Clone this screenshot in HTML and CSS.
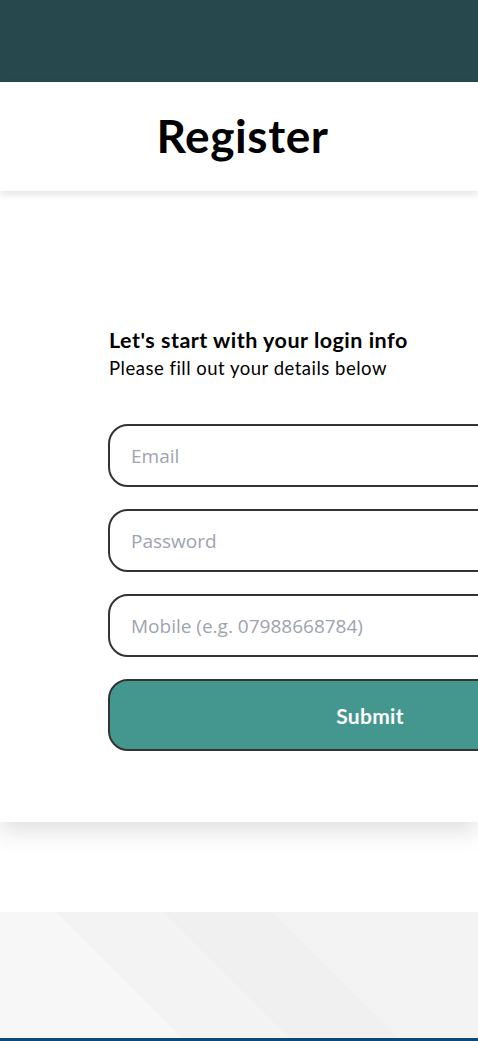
FILE: index.html
```html
<!DOCTYPE html>
<html lang="en">
<head>
<meta charset="utf-8">
<title>Register</title>
<link rel="stylesheet" href="styles.css">
</head>
<body>
  <div class="topbar"></div>
  <header class="page-header">
    <h1 class="title">Register</h1>
  </header>
  <main class="main">
    <form class="form">
      <div class="intro">
        <h2 class="intro-title">Let's start with your login info</h2>
        <p class="intro-sub">Please fill out your details below</p>
      </div>
      <input class="field" type="email" placeholder="Email">
      <input class="field" type="password" placeholder="Password">
      <input class="field" type="tel" placeholder="Mobile (e.g. 07988668784)">
      <button class="submit" type="button">Submit</button>
    </form>
  </main>
  <div class="spacer"></div>
  <footer class="footer">
    <div class="footer-bg"></div>
  </footer>
</body>
</html>
```

FILE: styles.css
```css
* { box-sizing: border-box; }
html, body { margin: 0; padding: 0; }
body {
  overflow-x: hidden;
  background: #ffffff;
  font-family: Lato, "Noto Sans", sans-serif;
  color: #000;
}
.topbar {
  height: 82px;
  background: #27494d;
}
.page-header {
  position: relative;
  z-index: 2;
  height: 109px;
  background: #fff;
  display: flex;
  align-items: center;
  justify-content: center;
  padding-left: 7px;
  box-shadow: 0 3px 8px rgba(0,0,0,0.12);
}
.title {
  margin: 0;
  font-size: 46px;
  font-weight: 700;
  letter-spacing: 0.6px;
  line-height: 1;
  padding-bottom: 2px;
}
.main {
  position: relative;
  z-index: 1;
  height: 631px;
  background: #fff;
  padding: 136px 0 0 108px;
  box-shadow: 0 10px 22px rgba(0,0,0,0.12);
}
.form {
  width: 524px;
  display: flex;
  flex-direction: column;
  gap: 22px;
}
.intro { margin-bottom: 22px; }
.intro-title {
  margin: 0;
  font-size: 21.5px;
  font-weight: 700;
  letter-spacing: 0.5px;
  line-height: 26px;
  padding-left: 1px;
}
.intro-sub {
  margin: 3px 0 0;
  font-size: 18.5px;
  letter-spacing: 0.5px;
  line-height: 24px;
  padding-left: 1px;
}
.field {
  display: block;
  width: 100%;
  height: 63px;
  border: 2px solid #333;
  border-radius: 20px;
  padding: 0 21px;
  font-family: "Open Sans", sans-serif;
  font-size: 19px;
  color: #333;
  background: #fff;
  outline: none;
}
.field::placeholder { color: #9ea3b0; }
.submit {
  display: block;
  width: 100%;
  height: 72px;
  border: 2px solid #333;
  border-radius: 20px;
  background: #44978f;
  color: #fff;
  font-family: Lato, "Noto Sans", sans-serif;
  font-size: 21px;
  font-weight: 700;
  letter-spacing: 0.3px;
  cursor: pointer;
}
.spacer {
  height: 90px;
  background: #fff;
}
.footer {
  position: relative;
  height: 129px;
  background: #f3f3f3;
  border-bottom: 3px solid #0b4a78;
  overflow: hidden;
}
.footer-bg {
  position: absolute;
  inset: 0;
  background:
    linear-gradient(45deg, rgba(255,255,255,0.35) 0 30%, transparent 30% 100%),
    linear-gradient(45deg, transparent 0 48%, rgba(0,0,0,0.012) 48% 66%, transparent 66% 100%);
}
```
